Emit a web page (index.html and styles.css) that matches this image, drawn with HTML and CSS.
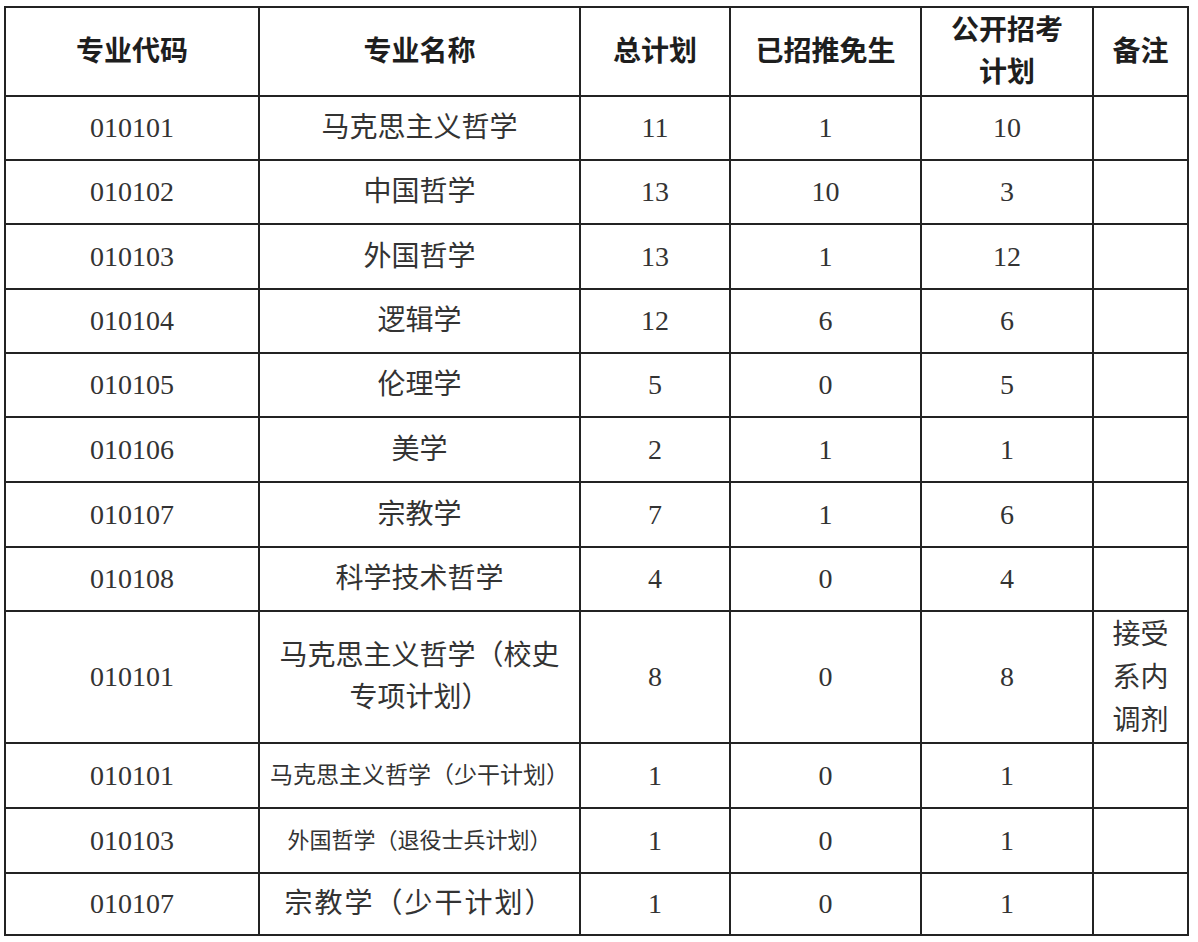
FILE: index.html
```html
<!DOCTYPE html>
<html lang="zh-CN">
<head>
<meta charset="utf-8">
<title>招生计划</title>
<link rel="stylesheet" href="styles.css">
</head>
<body>
<div class="plan" role="table">
  <div class="cell head" role="columnheader">专业代码</div>
  <div class="cell head" role="columnheader">专业名称</div>
  <div class="cell head" role="columnheader">总计划</div>
  <div class="cell head" role="columnheader">已招推免生</div>
  <div class="cell head two" role="columnheader">公开招考<br>计划</div>
  <div class="cell head" role="columnheader">备注</div>

  <div class="cell">010101</div><div class="cell">马克思主义哲学</div><div class="cell">11</div><div class="cell">1</div><div class="cell">10</div><div class="cell"></div>
  <div class="cell">010102</div><div class="cell">中国哲学</div><div class="cell">13</div><div class="cell">10</div><div class="cell">3</div><div class="cell"></div>
  <div class="cell">010103</div><div class="cell">外国哲学</div><div class="cell">13</div><div class="cell">1</div><div class="cell">12</div><div class="cell"></div>
  <div class="cell">010104</div><div class="cell">逻辑学</div><div class="cell">12</div><div class="cell">6</div><div class="cell">6</div><div class="cell"></div>
  <div class="cell">010105</div><div class="cell">伦理学</div><div class="cell">5</div><div class="cell">0</div><div class="cell">5</div><div class="cell"></div>
  <div class="cell">010106</div><div class="cell">美学</div><div class="cell">2</div><div class="cell">1</div><div class="cell">1</div><div class="cell"></div>
  <div class="cell">010107</div><div class="cell">宗教学</div><div class="cell">7</div><div class="cell">1</div><div class="cell">6</div><div class="cell"></div>
  <div class="cell">010108</div><div class="cell">科学技术哲学</div><div class="cell">4</div><div class="cell">0</div><div class="cell">4</div><div class="cell"></div>
  <div class="cell">010101</div><div class="cell two">马克思主义哲学（校史<br>专项计划）</div><div class="cell">8</div><div class="cell">0</div><div class="cell">8</div><div class="cell note">接受<br>系内<br>调剂</div>
  <div class="cell">010101</div><div class="cell small">马克思主义哲学（少干计划）</div><div class="cell">1</div><div class="cell">0</div><div class="cell">1</div><div class="cell"></div>
  <div class="cell">010103</div><div class="cell smaller">外国哲学（退役士兵计划）</div><div class="cell">1</div><div class="cell">0</div><div class="cell">1</div><div class="cell"></div>
  <div class="cell">010107</div><div class="cell spaced">宗教学（少干计划）</div><div class="cell">1</div><div class="cell">0</div><div class="cell">1</div><div class="cell"></div>
</div>
</body>
</html>
```

FILE: styles.css
```css
html, body {
  margin: 0;
  padding: 0;
  background: #ffffff;
}

body {
  padding: 6px 0 0 4px;
  font-family: "Liberation Serif", "Noto Sans CJK SC", serif;
  color: #333333;
}

.plan {
  display: grid;
  grid-template-columns: 254px 321px 150px 191px 172px 95px;
  grid-template-rows: 89px 64px 64px 65px 64px 64px 65px 65px 64px 132px 65px 65px 62px;
  width: max-content;
  border-top: 2px solid #232323;
  border-left: 2px solid #232323;
}

.cell {
  box-sizing: border-box;
  border-right: 2px solid #232323;
  border-bottom: 2px solid #232323;
  display: flex;
  align-items: center;
  justify-content: center;
  text-align: center;
  font-size: 28px;
  line-height: 42px;
  white-space: nowrap;
}

.head {
  font-weight: 700;
  color: #1e1e1e;
}

.note {
  line-height: 43px;
}

.small {
  font-size: 23px;
}

.smaller {
  font-size: 22px;
}

.spaced {
  letter-spacing: 2px;
}
```
